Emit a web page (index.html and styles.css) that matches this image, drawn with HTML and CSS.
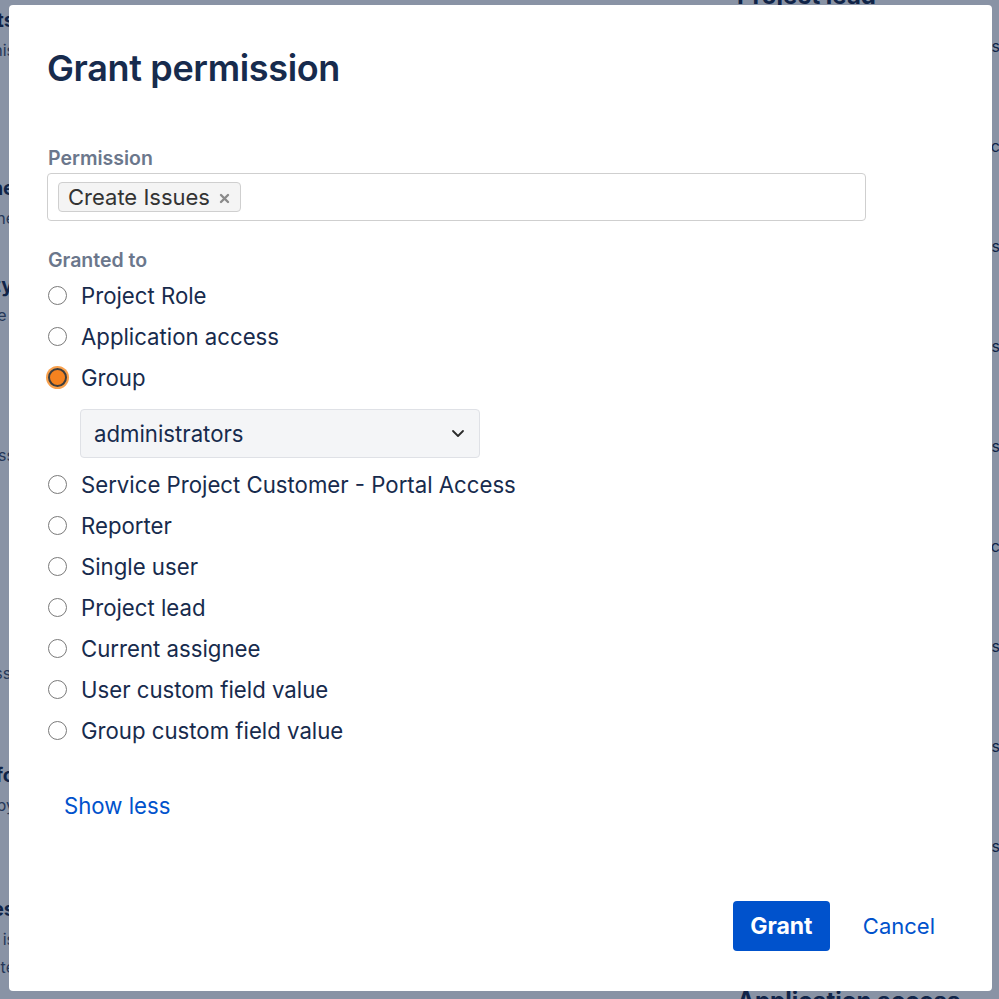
FILE: index.html
```html
<!DOCTYPE html>
<html lang="en">
<head>
<meta charset="utf-8">
<title>Grant permission</title>
<link rel="stylesheet" href="styles.css">
</head>
<body>
<div class="page">
  <div class="bg-left">
    <div class="bg-item"><div class="bg-h">Browse Projects</div><div class="bg-d">Ability to browse this</div></div>
    <div class="bg-item gap1"><div class="bg-h">Manage sprints for the</div><div class="bg-d">Ability to manage the</div></div>
    <div class="bg-item gap2"><div class="bg-h">View Development Tools for type:</div><div class="bg-d">Allows users to see the i</div></div>
    <div class="bg-item gap3"><div class="bg-d">Ability to view and access</div></div>
    <div class="bg-item gap4"><div class="bg-d">Users with this permissi</div></div>
    <div class="bg-item gap5"><div class="bg-h">Transition Work Log Info</div><div class="bg-d">Ability to see who did it by</div></div>
    <div class="bg-item gap6"><div class="bg-h">Link Issues</div><div class="bg-d">Ability to link this is</div><div class="bg-d">Ability to create and upda te</div></div>
  </div>
  <div class="bg-right">
    <div class="bg-big">Project lead</div>
    <div class="bg-list">
      <span>s</span><span>sc</span><span>s</span><span>s</span><span>s</span><span>sc</span><span>s</span><span>s</span><span>s</span>
    </div>
    <div class="bg-big bottom">Application access</div>
  </div>
</div>
<div class="overlay"></div>
<div class="modal">
  <h1 class="title">Grant permission</h1>
  <div class="field">
    <div class="label">Permission</div>
    <div class="multi">
      <span class="tag">Create Issues
        <svg class="tag-x" width="11" height="11" viewBox="0 0 11 11"><path d="M2 2 L9 9 M9 2 L2 9" stroke="#8a8a8a" stroke-width="2.4" stroke-linecap="round"/></svg>
      </span>
    </div>
  </div>
  <div class="field granted">
    <div class="label">Granted to</div>
    <div class="radios">
      <div class="radio-row"><span class="radio"></span><span class="rtext">Project Role</span></div>
      <div class="radio-row"><span class="radio"></span><span class="rtext">Application access</span></div>
      <div class="radio-row"><span class="radio checked"></span><span class="rtext">Group</span></div>
      <div class="select">
        <span>administrators</span>
        <svg class="chev" width="14" height="9" viewBox="0 0 14 9"><path d="M2 2 L7 7 L12 2" fill="none" stroke="#2b2b2b" stroke-width="1.8" stroke-linecap="round" stroke-linejoin="round"/></svg>
      </div>
      <div class="radio-row"><span class="radio"></span><span class="rtext">Service Project Customer - Portal Access</span></div>
      <div class="radio-row"><span class="radio"></span><span class="rtext">Reporter</span></div>
      <div class="radio-row"><span class="radio"></span><span class="rtext">Single user</span></div>
      <div class="radio-row"><span class="radio"></span><span class="rtext">Project lead</span></div>
      <div class="radio-row"><span class="radio"></span><span class="rtext">Current assignee</span></div>
      <div class="radio-row"><span class="radio"></span><span class="rtext">User custom field value</span></div>
      <div class="radio-row"><span class="radio"></span><span class="rtext">Group custom field value</span></div>
    </div>
    <a class="show-less" href="#">Show less</a>
  </div>
  <div class="footer">
    <button class="btn primary">Grant</button>
    <button class="btn link">Cancel</button>
  </div>
</div>
</body>
</html>
```
FILE: styles.css
```css
* { box-sizing: border-box; }
html, body { margin: 0; padding: 0; }
body {
  width: 999px;
  height: 999px;
  overflow: hidden;
  background: #ffffff;
  font-family: Inter, "Noto Sans", "Liberation Sans", sans-serif;
  color: #172b4d;
  position: relative;
}
.page {
  display: flex;
  height: 999px;
}
.bg-left {
  width: 300px;
  margin-left: -285px;
  text-align: right;
  white-space: nowrap;
  padding-top: 8px;
}
.bg-item { display: flex; flex-direction: column; gap: 8px; }
.bg-h { font-size: 20px; font-weight: 700; color: #172b4d; line-height: 24px; }
.bg-d { font-size: 16px; color: #42526e; line-height: 20px; }
.gap1 { margin-top: 116px; }
.gap2 { margin-top: 45px; }
.gap3 { margin-top: 120px; }
.gap4 { margin-top: 198px; }
.gap5 { margin-top: 80px; }
.gap6 { margin-top: 82px; }
.bg-right {
  margin-left: 722px;
  width: 300px;
  flex: none;
  display: flex;
  flex-direction: column;
  white-space: nowrap;
}
.bg-big { font-size: 24px; font-weight: 700; line-height: 28px; margin-top: -18px; color: #172b4d; }
.bg-big.bottom { margin-top: auto; margin-bottom: -16px; }
.bg-list {
  display: flex; flex-direction: column; align-items: flex-end;
  padding-right: 37px; padding-top: 26px; gap: 80px;
  font-size: 16px; color: #172b4d; line-height: 20px;
}
.overlay {
  position: absolute;
  inset: 0;
  background: rgba(9, 30, 66, 0.48);
}
.modal {
  position: absolute;
  left: 9px;
  top: 5px;
  width: 983px;
  height: 986px;
  background: #ffffff;
  border-radius: 4px;
  padding: 40px 41px 40px 38px;
  display: flex;
  flex-direction: column;
}
.title {
  margin: 0;
  font-size: 36px;
  line-height: 46px;
  font-weight: 600;
  color: #172b4d;
  letter-spacing: -0.35px;
}
.field { margin-top: 55px; }
.granted { margin-top: 27px; }
.label {
  font-size: 19.5px;
  font-weight: 600;
  line-height: 24px;
  color: #6b778c;
  margin-bottom: 3px;
  margin-left: 1px;
}
.multi {
  width: 819px;
  height: 48px;
  border: 1.5px solid #cfcfcf;
  border-radius: 4px;
  padding: 0 0 0 10px;
  display: flex;
  align-items: center;
}
.tag {
  display: inline-flex;
  align-items: center;
  gap: 9px;
  height: 30px;
  padding: 0 10px 0 9px;
  background: #f4f4f4;
  border: 1.5px solid #cfcfcf;
  border-radius: 4px;
  font-size: 22px;
  color: #333333;
}
.tag-x { margin-top: 2px; }
.radios { display: flex; flex-direction: column; }
.radio-row {
  display: flex;
  align-items: center;
  height: 41px;
}
.radio {
  width: 19px;
  height: 19px;
  border-radius: 50%;
  border: 1.5px solid #7a7a7a;
  background: #ffffff;
  margin-left: 1px;
  margin-right: 14px;
  flex: none;
}
.radio.checked {
  background: #f5821f;
  border: 2px solid #3d3d3d;
  box-shadow: 0 0 0 2px #f9a14d;
}
.rtext { font-size: 22.2px; color: #172b4d; }
.select {
  margin: 11px 0 6px 33px;
  width: 400px;
  height: 49px;
  background: #f4f5f7;
  border: 1.5px solid #dfe1e6;
  border-radius: 4px;
  display: flex;
  align-items: center;
  justify-content: space-between;
  padding: 0 14px 0 13px;
  font-size: 22.2px;
  color: #172b4d;
}
.show-less {
  display: inline-block;
  margin-top: 43px;
  margin-left: 17px;
  font-size: 22.2px;
  line-height: 24px;
  color: #0052cc;
  text-decoration: none;
}
.footer {
  margin-top: auto;
  display: flex;
  justify-content: flex-end;
  align-items: center;
  gap: 17px;
}
.btn {
  font-family: inherit;
  font-size: 22px;
  height: 50px;
  border: none;
  border-radius: 4px;
  cursor: pointer;
}
.primary {
  background: #0052cc;
  color: #ffffff;
  font-weight: 700;
  font-size: 23px;
  width: 97px;
}
.link {
  background: transparent;
  color: #0052cc;
  padding: 0 16px;
}
```
